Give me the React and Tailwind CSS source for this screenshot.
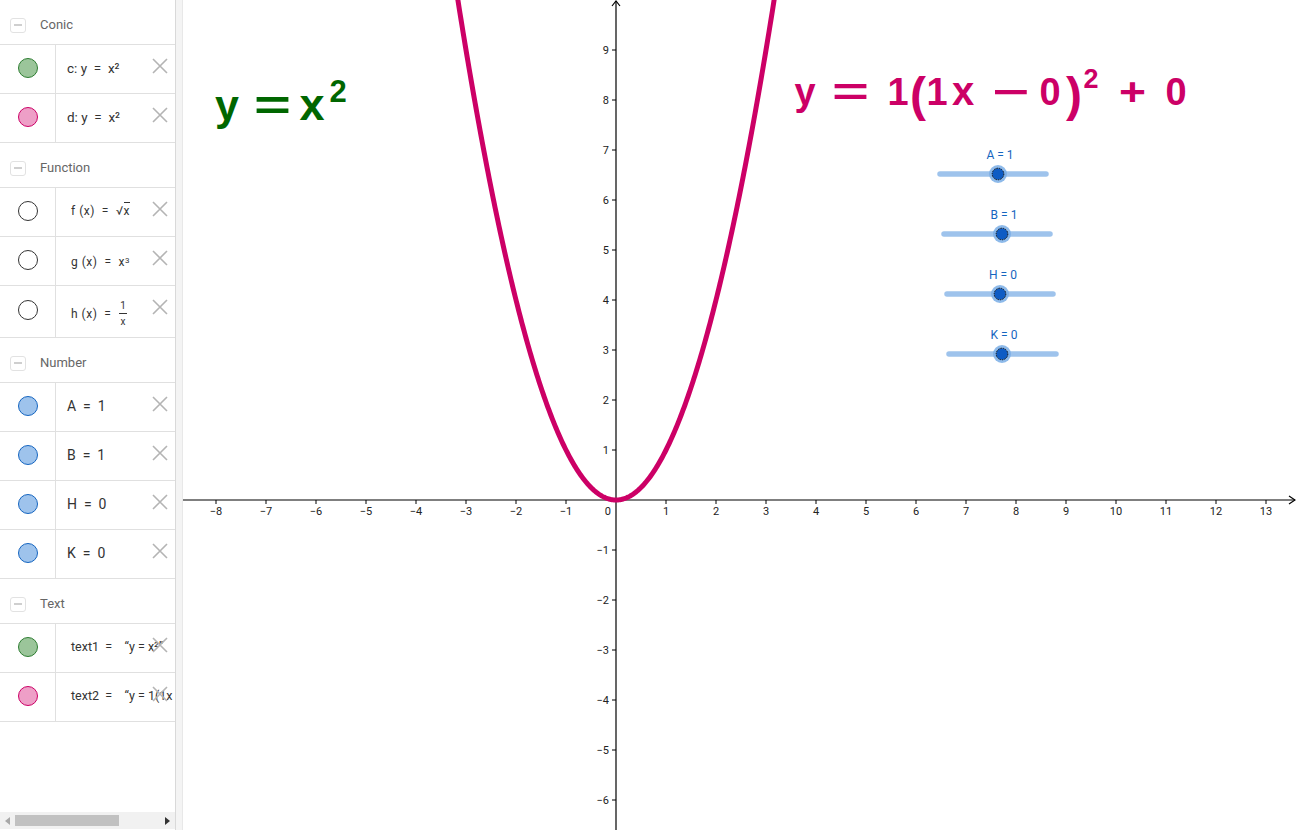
import React from "react";

const GREEN = { fill: "bg-[#9bc59a]", border: "border-[#2e7d32]" };
const PINK = { fill: "bg-[#ee9fc7]", border: "border-[#cc0066]" };
const BLUE = { fill: "bg-[#9ec3ec]", border: "border-[#1565c0]" };
const WHITE = { fill: "bg-white", border: "border-[#333333]" };

const CloseX = () => (
  <svg
    className="absolute right-[7px] top-[13px]"
    width="16"
    height="16"
    viewBox="0 0 16 16"
  >
    <path d="M1 1 L15 15 M15 1 L1 15" stroke="#b4b4b4" strokeWidth="1.6" fill="none" />
  </svg>
);

const Dot = ({ c }) => (
  <span className={`block w-[20px] h-[20px] rounded-full border ${c.fill} ${c.border}`} />
);

const Row = ({ color, children, h = "h-[49px]", indent = "pl-[11px]" }) => (
  <div className={`relative flex ${h} border-t border-[#e0e0e0]`}>
    <div className="w-[56px] flex items-center justify-center border-r border-[#e0e0e0] shrink-0 pb-[3px]">
      <Dot c={color} />
    </div>
    <div
      className={`flex-1 flex items-center ${indent} overflow-hidden whitespace-nowrap text-[#333333] pb-[2px]`}
    >
      {children}
    </div>
    <CloseX />
  </div>
);

const Group = ({ title, children }) => (
  <div className="border-b border-[#e0e0e0]">
    <div className="h-[44px] flex items-center pt-[6px] pl-[10px]">
      <span className="w-[16px] h-[15px] border border-[#e2e2e2] rounded-[3px] flex items-center justify-center">
        <span className="block w-[8px] h-[2px] bg-[#cfcfcf]" />
      </span>
      <span className="ml-[14px] text-[13px] text-[#666666]">{title}</span>
    </div>
    {children}
  </div>
);

const Sidebar = () => (
  <div className="w-[175px] h-full flex flex-col bg-white shrink-0 font-['Roboto',sans-serif]">
    <Group title="Conic">
      <Row color={GREEN}>
        <span className="text-[13.5px]">c: y &nbsp;=&nbsp; x²</span>
      </Row>
      <Row color={PINK}>
        <span className="text-[13.5px]">d: y &nbsp;=&nbsp; x²</span>
      </Row>
    </Group>
    <Group title="Function">
      <Row color={WHITE} indent="pl-[15px]">
        <span className="text-[12px] tracking-[0.5px]">
          f (x) &nbsp;= &nbsp;√<span className="border-t border-[#333333] pt-[1px]">x</span>
        </span>
      </Row>
      <Row color={WHITE} indent="pl-[15px]">
        <span className="text-[12px] tracking-[0.5px] pt-[4px]">
          g (x) &nbsp;= &nbsp;x<sup className="text-[8px] relative top-[-3px]">3</sup>
        </span>
      </Row>
      <Row color={WHITE} indent="pl-[15px]" h="h-[52px]">
        <span className="text-[12px] tracking-[0.5px] flex items-center pt-[6px]">
          h (x) &nbsp;= &nbsp;
          <span className="inline-flex flex-col items-center text-[10px] leading-[11px] ml-[1px]">
            <span>1</span>
            <span className="block w-[8px] h-[1px] bg-[#333333] my-[2px]" />
            <span>x</span>
          </span>
        </span>
      </Row>
    </Group>
    <Group title="Number">
      {["A", "B", "H", "K"].map((t, i) => (
        <Row key={t} color={BLUE}>
          <span className="text-[14px]">
            {t}&nbsp; = &nbsp;{i < 2 ? "1" : "0"}
          </span>
        </Row>
      ))}
    </Group>
    <Group title="Text">
      <Row color={GREEN} indent="pl-[15px]">
        <span className="text-[12.5px]">
          text1 &nbsp;= &nbsp;&nbsp;&nbsp;“y = x²”
        </span>
      </Row>
      <Row color={PINK} indent="pl-[15px]">
        <span className="text-[12.5px]">
          text2 &nbsp;= &nbsp;&nbsp;&nbsp;“y = 1(1x − 0)² + 0”
        </span>
      </Row>
    </Group>
    <div className="flex-1" />
    <div className="h-[17px] bg-[#f1f1f1] flex items-center pl-[5px] pr-[5px] mb-[1px]">
      <svg width="5" height="8" viewBox="0 0 5 8">
        <path d="M5 0 L0 4 L5 8 Z" fill="#a8a8a8" />
      </svg>
      <span className="ml-[5px] block w-[104px] h-[11px] bg-[#c1c1c1]" />
      <span className="flex-1" />
      <svg width="5" height="8" viewBox="0 0 5 8">
        <path d="M0 0 L5 4 L0 8 Z" fill="#333333" />
      </svg>
    </div>
  </div>
);

const X0 = 616;
const Y0 = 500;
const U = 50;

const num = (i) => `${i < 0 ? "\u2212" : ""}${Math.abs(i)}`;

const xTicks = [];
for (let i = -8; i <= 13; i++) if (i !== 0) xTicks.push(i);
const yTicks = [];
for (let i = -6; i <= 9; i++) if (i !== 0) yTicks.push(i);

const curve = [];
for (let t = -3.3; t <= 3.3001; t += 0.02) {
  curve.push(`${(X0 + U * t).toFixed(2)},${(Y0 - U * t * t).toFixed(2)}`);
}

const sliders = [
  { label: "A = 1", lx: 1000, ly: 159, x1: 940, x2: 1046, y: 174, k: 998 },
  { label: "B = 1", lx: 1004, ly: 219, x1: 944, x2: 1050, y: 234, k: 1002 },
  { label: "H = 0", lx: 1003, ly: 279, x1: 947, x2: 1053, y: 294, k: 1000 },
  { label: "K = 0", lx: 1004, ly: 339, x1: 949, x2: 1056, y: 354, k: 1002 },
];

const MATH = "'Liberation Sans', Arial, sans-serif";

// glyphs of the two big formulas: centre x, baseline, size, optional stretched width
const greenTokens = [
  { t: "y", cx: 227, b: 120, s: 43 },
  { t: "=", x: 255, w: 35, b: 120, s: 43 },
  { t: "x", cx: 312, b: 120, s: 45 },
  { t: "2", cx: 338, b: 102, s: 31 },
];

const pinkTokens = [
  { t: "y", cx: 805, b: 105, s: 38 },
  { t: "=", x: 833, w: 35, b: 105, s: 38 },
  { t: "1", cx: 898, b: 105, s: 38 },
  { t: "(", cx: 918, b: 111, s: 48 },
  { t: "1", cx: 937, b: 105, s: 38 },
  { t: "x", cx: 963, b: 105, s: 40 },
  { t: "\u2212", x: 993, w: 35, b: 105, s: 38 },
  { t: "0", cx: 1050, b: 105, s: 38 },
  { t: ")", cx: 1074, b: 111, s: 48 },
  { t: "2", cx: 1091, b: 88, s: 27 },
  { t: "+", x: 1120, w: 25, b: 105, s: 38 },
  { t: "0", cx: 1176, b: 105, s: 38 },
];

const Formula = ({ tokens, color }) =>
  tokens.map((g, i) =>
    g.w ? (
      <text
        key={i}
        x={g.x - 1}
        y={g.b}
        fontSize={g.s}
        fontWeight="700"
        fontFamily={MATH}
        fill={color}
        textLength={g.w + 2}
        lengthAdjust="spacingAndGlyphs"
      >
        {g.t}
      </text>
    ) : (
      <text
        key={i}
        x={g.cx}
        y={g.b}
        fontSize={g.s}
        fontWeight="700"
        fontFamily={MATH}
        fill={color}
        textAnchor="middle"
      >
        {g.t}
      </text>
    )
  );

const Graph = () => (
  <div className="flex-1 h-full bg-white">
    <svg width="1113" height="830" viewBox="183 0 1113 830" className="block">
      {/* axes */}
      <line x1="183" y1={Y0} x2="1295" y2={Y0} stroke="#000" strokeWidth="1.2" />
      <polyline points="1289,496 1295,500 1289,504" fill="none" stroke="#000" strokeWidth="1.2" />
      <line x1={X0} y1="1" x2={X0} y2="830" stroke="#000" strokeWidth="1.2" />
      <polyline points="612,6 616,1 620,6" fill="none" stroke="#000" strokeWidth="1.2" />

      <g fontFamily="'Roboto', sans-serif" fontSize="11" fill="#222">
        {xTicks.map((i) => (
          <g key={`x${i}`}>
            <line x1={X0 + U * i} y1={Y0} x2={X0 + U * i} y2={Y0 + 4} stroke="#000" />
            <text x={X0 + U * i} y={Y0 + 15} textAnchor="middle">
              {num(i)}
            </text>
          </g>
        ))}
        {yTicks.map((i) => (
          <g key={`y${i}`}>
            <line x1={X0 - 4} y1={Y0 - U * i} x2={X0} y2={Y0 - U * i} stroke="#000" />
            <text x={X0 - 7} y={Y0 - U * i + 4} textAnchor="end">
              {num(i)}
            </text>
          </g>
        ))}
        <text x={X0 - 5} y={Y0 + 15} textAnchor="end">
          0
        </text>
      </g>

      <polyline
        points={curve.join(" ")}
        fill="none"
        stroke="#cc0066"
        strokeWidth="5"
        strokeLinejoin="round"
      />

      <Formula tokens={greenTokens} color="#006600" />
      <Formula tokens={pinkTokens} color="#cc0066" />

      {sliders.map((s) => (
        <g key={s.label}>
          <text
            x={s.lx}
            y={s.ly}
            textAnchor="middle"
            fontFamily="'Roboto', sans-serif"
            fontSize="12"
            fill="#1565c0"
          >
            {s.label}
          </text>
          <line
            x1={s.x1}
            y1={s.y}
            x2={s.x2}
            y2={s.y}
            stroke="#9ec3ec"
            strokeWidth="5.5"
            strokeLinecap="round"
          />
          <circle cx={s.k} cy={s.y} r="9" fill="#7aaee6" opacity="0.85" />
          <circle cx={s.k} cy={s.y} r="5.8" fill="#0f5cc4" stroke="#111" strokeWidth="1" strokeDasharray="1.5 1" />
        </g>
      ))}
    </svg>
  </div>
);

export default function App() {
  return (
    <div className="w-[1296px] h-[830px] flex overflow-hidden bg-white">
      <Sidebar />
      <div className="w-[8px] h-full shrink-0 bg-[#f4f4f4] border-l border-[#d9d9d9] border-r border-r-[#e8e8e8]" />
      <Graph />
    </div>
  );
}
